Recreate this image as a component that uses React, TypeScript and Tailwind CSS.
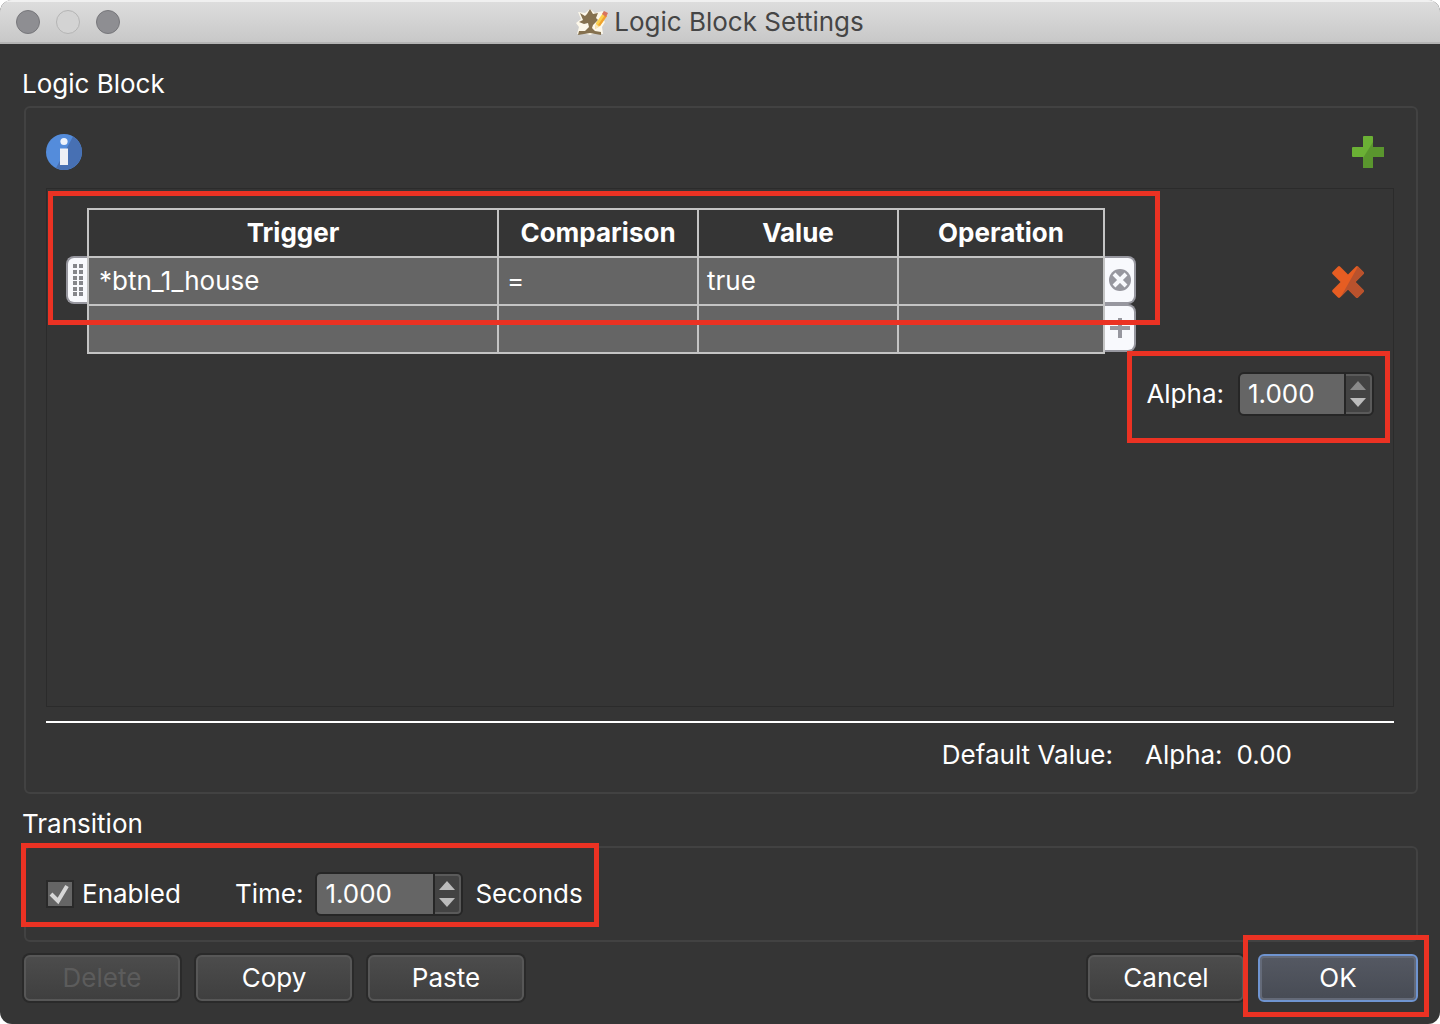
import { useState } from "react";

const rows = [
  { trigger: "*btn_1_house", comparison: "=", value: "true", operation: "" },
  { trigger: "", comparison: "", value: "", operation: "" },
];

const cellClass = "h-12 border-2 border-[#c4c4c4] p-0";

const Highlight = ({ className }: { className: string }) => (
  <div
    className={`pointer-events-none absolute z-10 border-5 border-[#eb3223] ${className}`}
  />
);

const AppLogo = () => (
  <svg width="32" height="28" viewBox="0 0 32 28" aria-hidden="true">
    <path
      d="M2 4 L9 5 L14 1 L19 5 L27 3 L26 10 L29 14 L26 19 L27 26 L19 25 L14 27 L8 25 L1 26 L3 19 L0 15 L5 11 Z"
      fill="#fdf8ea"
    />
    <path
      d="M4 5 L9 8 L11 6 L14 1 L17 6 L22 5 L20 10 L22 12 L17 17 L16 20 L19 23 L25 24 L25 27 L14 25 L2 27 L3 23 L9 23 L13 19 L12 15 L8 16 L3 14 L7 12 Z"
      fill="#85714f"
    />
    <path d="M19 21 L20 15 L27 5 L31 8 L24 18 Z" fill="#fbd04c" />
    <path d="M22 17 L29 7 L31 8 L24 18 Z" fill="#f0a22f" />
    <path d="M26 6 L28 3 L32 5 L30 9 Z" fill="#d9745c" />
    <path d="M19 21 L20 16 L23 19 Z" fill="#f6e4c0" />
  </svg>
);

const InfoIcon = () => (
  <svg width="36" height="36" viewBox="0 0 36 36" aria-hidden="true">
    <circle cx="18" cy="18" r="18" fill="#548cdb" />
    <path d="M27 2.4 A18 18 0 0 1 10 34.1 Z" fill="#4770b3" />
    <circle cx="18" cy="7.5" r="3.6" fill="#eef3fb" />
    <rect x="14" y="14.5" width="8" height="16.5" fill="#eef0f5" />
  </svg>
);

const PlusIcon = () => (
  <svg width="32" height="32" viewBox="0 0 32 32" aria-hidden="true">
    <path
      d="M12 0 H20 Q21 0 21 1 V11 H31 Q32 11 32 12 V20 Q32 21 31 21 H21 V31 Q21 32 20 32 H12 Q11 32 11 31 V21 H1 Q0 21 0 20 V12 Q0 11 1 11 H11 V1 Q11 0 12 0 Z"
      fill="#6bb135"
    />
    <path
      d="M21 6 V11 H31 Q32 11 32 12 V20 Q32 21 31 21 H21 V31 Q21 32 20 32 H12 Q11 32 11 31 V22 Z"
      fill="#5a962e"
    />
  </svg>
);

const CrossIcon = () => (
  <svg width="34" height="34" viewBox="0 0 34 34" aria-hidden="true">
    <path
      d="M7 1.5 Q8 0.6 9 1.5 L17 9.5 L25 1.5 Q26 0.6 27 1.5 L32.5 7 Q33.4 8 32.5 9 L24.5 17 L32.5 25 Q33.4 26 32.5 27 L27 32.5 Q26 33.4 25 32.5 L17 24.5 L9 32.5 Q8 33.4 7 32.5 L1.5 27 Q0.6 26 1.5 25 L9.5 17 L1.5 9 Q0.6 8 1.5 7 Z"
      fill="#e65d22"
    />
    <path
      d="M27 1.5 L32.5 7 Q33.4 8 32.5 9 L24.5 17 L32.5 25 Q33.4 26 32.5 27 L27 32.5 Q26 33.4 25 32.5 L17 24.5 L10 31.5 Z"
      fill="#b9522d"
    />
  </svg>
);

const RowRemoveIcon = () => (
  <svg width="24" height="24" viewBox="0 0 24 24" aria-hidden="true">
    <circle cx="12" cy="12" r="11" fill="#97979f" />
    <path d="M6 6 L18 18 M18 6 L6 18" stroke="#f8f9fd" strokeWidth="4" />
  </svg>
);

const RowAddIcon = () => (
  <svg width="20" height="20" viewBox="0 0 20 20" aria-hidden="true">
    <path d="M10 0 V20 M0 10 H20" stroke="#97979f" strokeWidth="4" />
  </svg>
);

const GripIcon = () => (
  <svg width="12" height="34" viewBox="0 0 12 34" fill="#85868b" aria-hidden="true">
    {[1, 7, 13, 18, 24, 29].map((y) => (
      <g key={y}>
        <rect x="1" y={y} width="4" height="4" />
        <rect x="7" y={y} width="4" height="4" />
      </g>
    ))}
  </svg>
);

type SpinBoxProps = {
  id: string;
  inputClass: string;
  atMax?: boolean;
};

const SpinBox = ({ id, inputClass, atMax }: SpinBoxProps) => {
  const [value, setValue] = useState("1.000");
  const step = (amount: number) =>
    setValue((current) => Math.max(0, Number(current) + amount).toFixed(3));

  return (
    <div className="flex h-11 rounded-md border-2 border-[#262626] bg-[#262626]">
      <input
        id={id}
        type="text"
        inputMode="decimal"
        value={value}
        onChange={(e) => setValue(e.target.value)}
        className={`rounded-l-sm bg-[#656565] pl-2 text-white outline-none ${inputClass}`}
      />
      <div className="ml-0.5 flex w-[26px] flex-col rounded-r-sm border-2 border-l-0 border-[#5a5a5a] bg-[#434343]">
        <button
          type="button"
          aria-label="Increase"
          disabled={atMax}
          onClick={() => step(0.1)}
          className={`flex flex-1 items-end justify-center pb-1 ${atMax ? "text-[#8a8a8a]" : "text-[#bcbcbc]"}`}
        >
          <svg width="16" height="9" viewBox="0 0 16 9" fill="currentColor">
            <path d="M8 0 L16 9 H0 Z" />
          </svg>
        </button>
        <button
          type="button"
          aria-label="Decrease"
          onClick={() => step(-0.1)}
          className="flex flex-1 items-start justify-center pt-1 text-[#bcbcbc]"
        >
          <svg width="16" height="9" viewBox="0 0 16 9" fill="currentColor">
            <path d="M0 0 H16 L8 9 Z" />
          </svg>
        </button>
      </div>
    </div>
  );
};

const DialogButton = ({ text, disabled }: { text: string; disabled?: boolean }) => (
  <button
    type="button"
    disabled={disabled}
    className="h-[46px] w-[156px] rounded-md border-2 border-[#575757] bg-gradient-to-b from-[#4c4c4c] to-[#3f3f3f] text-white shadow-[0_0_0_2px_#2a2a2a] disabled:text-[#5c5c5c]"
  >
    {text}
  </button>
);

const TitleBar = () => (
  <header className="relative flex h-11 items-center justify-center border-b-2 border-[#b4b4b4] bg-gradient-to-b from-[#dedede] to-[#c8c8c8] pt-0.5 shadow-[inset_0_2px_0_#f0f0f0]">
    <div className="absolute left-4 flex gap-4">
      <button type="button" aria-label="Close" className="size-6 rounded-full border border-[#77777b] bg-[#8e8e92]" />
      <button type="button" aria-label="Minimize" className="size-6 rounded-full border border-[#b4b4b4] bg-[#d3d3d3]" />
      <button type="button" aria-label="Zoom" className="size-6 rounded-full border border-[#77777b] bg-[#8e8e92]" />
    </div>
    <div className="flex items-center gap-1.5 text-[#454545]">
      <AppLogo />
      <h1>Logic Block Settings</h1>
    </div>
  </header>
);

const LogicTable = () => (
  <div className="relative flex flex-1">
    <Highlight className="-top-[17px] -right-6 bottom-[29px] -left-[18px]" />
    <div className="w-[21px] pt-12">
      <button
        type="button"
        aria-label="Move row"
        className="flex h-12 w-full items-center justify-center rounded-l-lg border-2 border-r-0 border-[#97979f] bg-[#f8f9fd]"
      >
        <GripIcon />
      </button>
    </div>
    <table className="flex-1 table-fixed border-collapse">
      <colgroup>
        <col />
        <col className="w-[200px]" />
        <col className="w-[200px]" />
        <col className="w-[206px]" />
      </colgroup>
      <thead>
        <tr>
          <th className={cellClass}>Trigger</th>
          <th className={cellClass}>Comparison</th>
          <th className={cellClass}>Value</th>
          <th className={cellClass}>Operation</th>
        </tr>
      </thead>
      <tbody className="bg-[#656565]">
        {rows.map((row, index) => (
          <tr key={index}>
            <td className={`${cellClass} pl-2.5`}>{row.trigger}</td>
            <td className={`${cellClass} pl-2`}>{row.comparison}</td>
            <td className={`${cellClass} pl-2`}>{row.value}</td>
            <td className={`${cellClass} pl-2`}>{row.operation}</td>
          </tr>
        ))}
      </tbody>
    </table>
    <div className="w-[31px] pt-12">
      <button
        type="button"
        aria-label="Remove row"
        className="flex h-12 w-full items-center justify-center rounded-r-lg border-2 border-l-0 border-[#97979f] bg-[#f8f9fd]"
      >
        <RowRemoveIcon />
      </button>
      <button
        type="button"
        aria-label="Add row"
        className="flex h-12 w-full items-center justify-center rounded-r-lg border-2 border-l-0 border-[#97979f] bg-[#f8f9fd]"
      >
        <RowAddIcon />
      </button>
    </div>
  </div>
);

const App = () => {
  const [enabled, setEnabled] = useState(true);

  return (
    <div className="min-h-screen bg-white font-['Inter',sans-serif] text-[26px] leading-9">
      <div className="flex min-h-screen flex-col overflow-hidden rounded-xl bg-[#353535] text-white">
        <TitleBar />
        <main className="flex flex-1 flex-col px-[22px] pt-[22px] pb-[22px]">
          <h2>Logic Block</h2>
          <section className="mt-1 ml-0.5 flex flex-1 flex-col rounded-md border-2 border-[#424242] pt-[26px] pr-[22px] pb-[19px] pl-5">
            <div className="flex items-center justify-between pr-2.5">
              <button type="button" aria-label="Info">
                <InfoIcon />
              </button>
              <button type="button" aria-label="Add block">
                <PlusIcon />
              </button>
            </div>

            <div className="mt-[18px] flex-1 border border-[#2b2b2b] py-[19px] pr-[19px] pl-[19px]">
              <div className="flex">
                <LogicTable />
                <div className="flex w-[238px] justify-end pt-[57px] pr-[9px]">
                  <button type="button" aria-label="Delete block" className="h-[34px]">
                    <CrossIcon />
                  </button>
                </div>
              </div>
              <div className="mt-[18px] flex justify-end">
                <div className="relative flex items-center gap-3.5">
                  <Highlight className="-top-[21px] -right-4 -bottom-[27px] -left-[19px]" />
                  <label htmlFor="alpha">Alpha:</label>
                  <SpinBox id="alpha" inputClass="w-[104px]" atMax />
                </div>
              </div>
            </div>

            <hr className="mt-3.5 border-t-2 border-white" />
            <div className="mt-3.5 flex justify-end pr-[102px]">
              <span className="mr-8">Default Value:</span>
              <span className="mr-3.5">Alpha:</span>
              <span>0.00</span>
            </div>
          </section>

          <h2 className="mt-3">Transition</h2>
          <section className="mt-1 ml-0.5 flex h-24 items-center rounded-md border-2 border-[#424242] pl-5">
            <div className="relative flex items-center">
              <Highlight className="-top-[29px] -right-4 -bottom-[11px] -left-[25px]" />
              <div className="relative size-7">
                <input
                  id="enabled"
                  type="checkbox"
                  checked={enabled}
                  onChange={(e) => setEnabled(e.target.checked)}
                  className="block size-7 appearance-none border-2 border-[#2a2a2a] bg-[#656565]"
                />
                {enabled && (
                  <svg
                    className="pointer-events-none absolute inset-0"
                    width="28"
                    height="28"
                    viewBox="0 0 28 28"
                    fill="none"
                  >
                    <path d="M5 14 L12 21 L21 6" stroke="#d6d6d6" strokeWidth="4" />
                  </svg>
                )}
              </div>
              <label htmlFor="enabled" className="ml-2">
                Enabled
              </label>
              <label htmlFor="time" className="mr-3 ml-[54px]">
                Time:
              </label>
              <SpinBox id="time" inputClass="w-[116px]" />
              <span className="ml-3">Seconds</span>
            </div>
          </section>

          <div className="mt-3 ml-0.5 flex items-center gap-4">
            <DialogButton text="Delete" disabled />
            <DialogButton text="Copy" />
            <DialogButton text="Paste" />
            <div className="ml-auto flex items-center gap-3.5">
              <DialogButton text="Cancel" />
              <div className="relative">
                <Highlight className="-top-[19px] -right-[11px] -bottom-[15px] -left-[15px]" />
                <button
                  type="button"
                  className="block h-12 w-40 rounded-md border-2 border-[#6f94d0] bg-gradient-to-b from-[#555963] to-[#474b54] text-white shadow-[inset_0_0_0_2px_#646a78]"
                >
                  OK
                </button>
              </div>
            </div>
          </div>
        </main>
      </div>
    </div>
  );
};

export default App;
